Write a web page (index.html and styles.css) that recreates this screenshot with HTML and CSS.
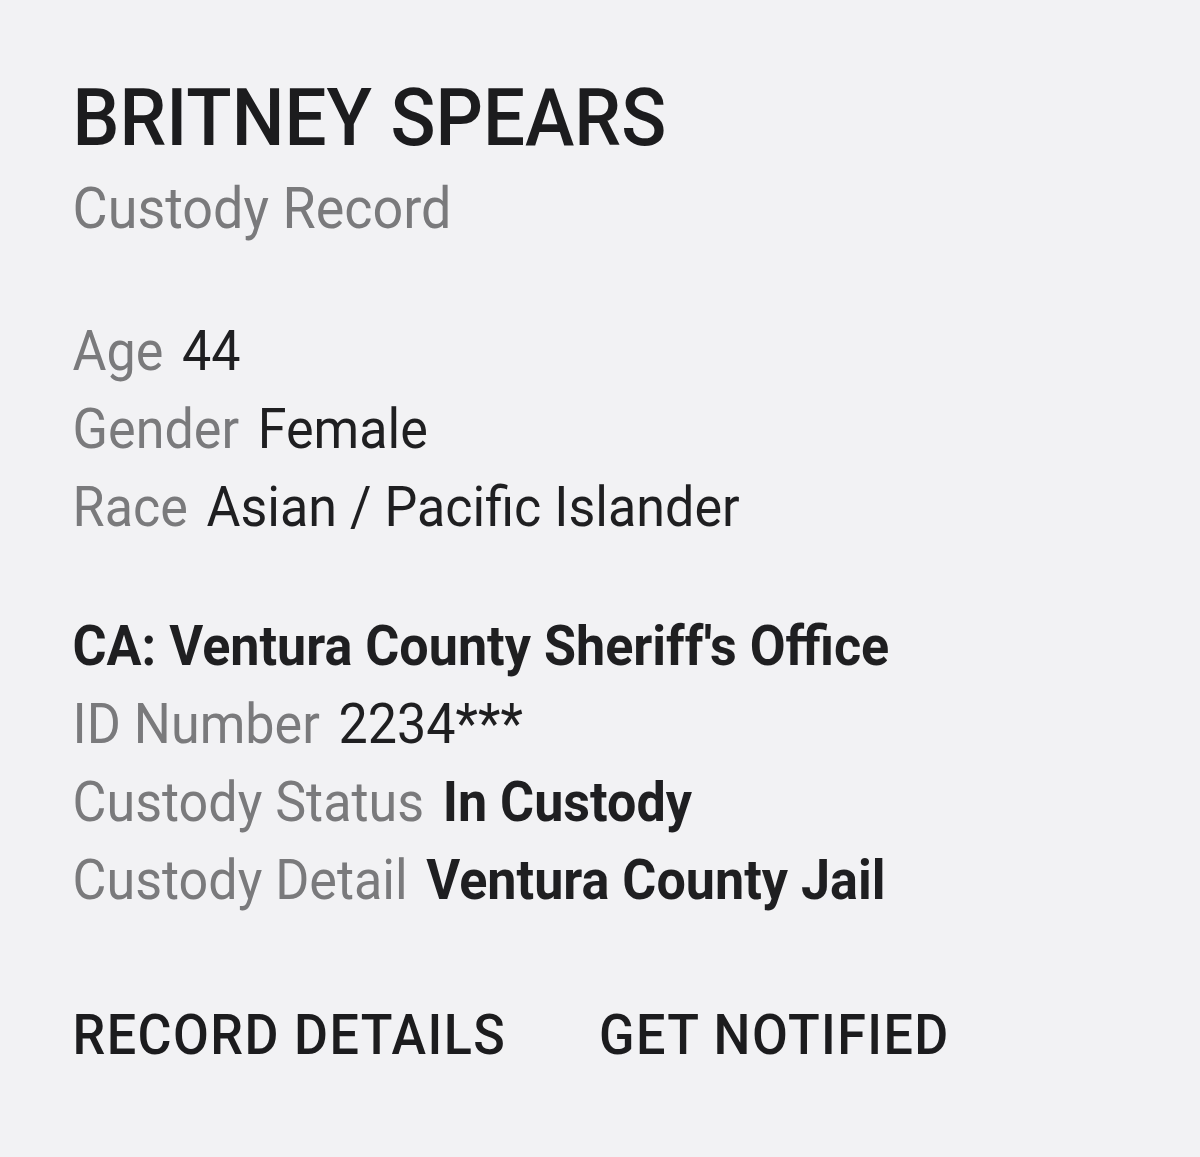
FILE: index.html
```html
<!DOCTYPE html>
<html lang="en">

<head>
    <meta charset="UTF-8">
    <meta name="viewport" content="width=device-width, initial-scale=1.0">
    <title>Custody Record</title>
    <link rel="stylesheet" href="styles.css">
</head>

<body>
    <div class="record">
        <h1 class="name">BRITNEY SPEARS</h1>
        <div class="subtitle">Custody Record</div>

        <!-- Personal details -->
        <div class="details">
            <div class="row"><span class="label">Age</span><span class="value">44</span></div>
            <div class="row"><span class="label">Gender</span><span class="value">Female</span></div>
            <div class="row"><span class="label">Race</span><span class="value">Asian / Pacific Islander</span></div>
        </div>

        <!-- Agency details -->
        <div class="details agency">
            <div class="row"><span class="value strong">CA: Ventura County Sheriff's Office</span></div>
            <div class="row"><span class="label">ID Number</span><span class="value">2234***</span></div>
            <div class="row"><span class="label">Custody Status</span><span class="value strong">In Custody</span></div>
            <div class="row"><span class="label">Custody Detail</span><span class="value strong">Ventura County Jail</span></div>
        </div>

        <div class="actions">
            <button class="action">RECORD DETAILS</button>
            <button class="action">GET NOTIFIED</button>
        </div>
    </div>
</body>

</html>
```

FILE: styles.css
```css
body {
    font-family: 'Roboto', 'Liberation Sans', sans-serif;
    background-color: #f2f2f4;
    margin: 0;
    padding: 0;
}

/* the card text is set slightly narrow */
.record {
    padding: 70px 0 0 78px;
    transform: scaleX(0.93);
    transform-origin: left top;
}

.name {
    margin: 0;
    font-size: 80px;
    line-height: 96px;
    font-weight: 500;
    color: #1c1c1e;
}

.subtitle {
    margin-top: 7px;
    font-size: 58px;
    line-height: 70px;
    color: #7a7a7c;
}

.details {
    margin-top: 69px;
}

.agency {
    margin-top: 61px;
}

.row {
    display: flex;
    gap: 20px;
    font-size: 56px;
    line-height: 78px;
    white-space: nowrap;
}

.label {
    color: #7a7a7c;
}

.value {
    color: #1f1f21;
}

.strong {
    font-weight: 700;
}

.actions {
    display: flex;
    gap: 100px;
    margin-top: 77px;
}

.action {
    padding: 0;
    font-family: inherit;
    font-size: 56px;
    line-height: 78px;
    font-weight: 500;
    letter-spacing: 1.5px;
    color: #1c1c1e;
    background: none;
    border: none;
    cursor: pointer;
}
```
